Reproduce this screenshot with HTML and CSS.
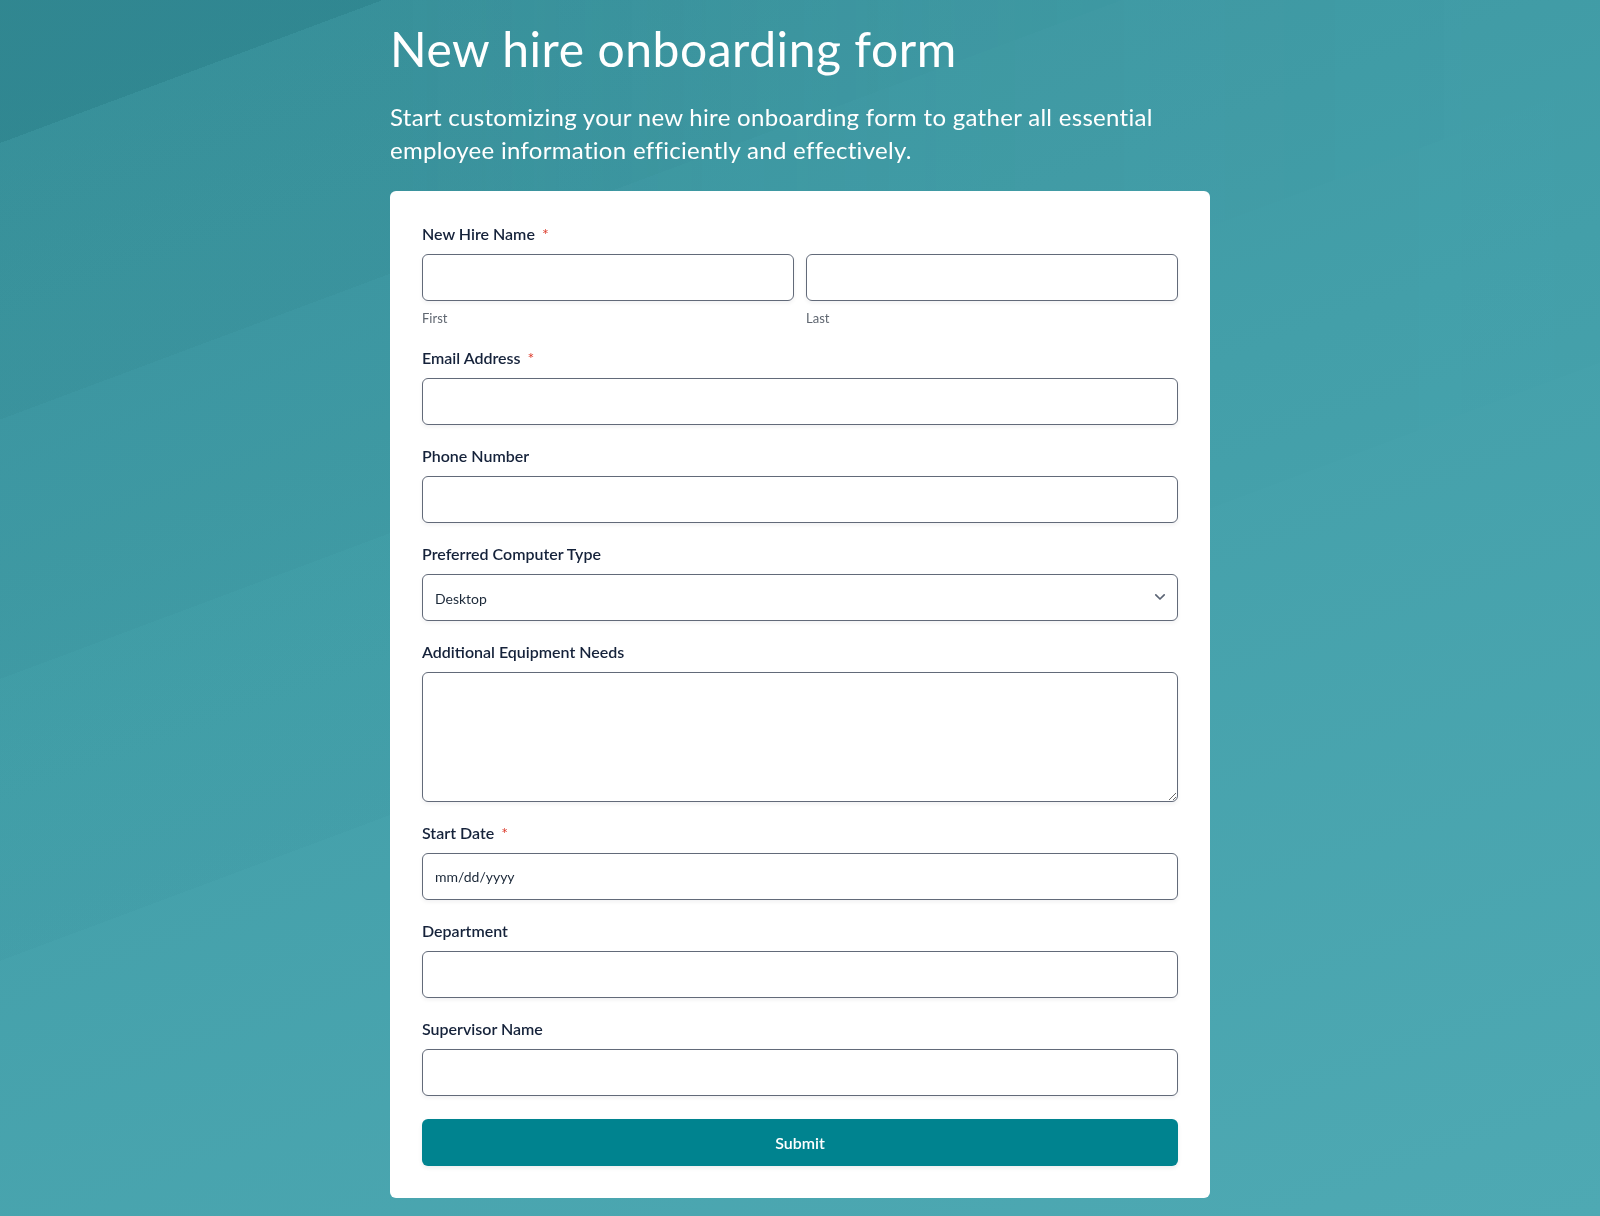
FILE: index.html
```html
<!DOCTYPE html>
<html lang="en">
<head>
<meta charset="utf-8">
<title>New hire onboarding form</title>
<link rel="stylesheet" href="styles.css">
</head>
<body>
<div class="bg"></div>
<main class="page">
  <h1 class="title">New hire onboarding form</h1>
  <p class="subtitle">Start customizing your new hire onboarding form to gather all essential employee information efficiently and effectively.</p>
  <form class="card">
    <div class="field">
      <label class="label">New Hire Name <span class="req">*</span></label>
      <div class="name-row">
        <div class="name-col">
          <input class="input" type="text">
          <span class="sublabel">First</span>
        </div>
        <div class="name-col">
          <input class="input" type="text">
          <span class="sublabel">Last</span>
        </div>
      </div>
    </div>
    <div class="field">
      <label class="label">Email Address <span class="req">*</span></label>
      <input class="input" type="text">
    </div>
    <div class="field">
      <label class="label">Phone Number</label>
      <input class="input" type="text">
    </div>
    <div class="field">
      <label class="label">Preferred Computer Type</label>
      <div class="select-wrap">
        <select class="input select">
          <option>Desktop</option>
          <option>Laptop</option>
        </select>
        <svg class="chevron" width="12" height="8" viewBox="0 0 12 8" aria-hidden="true"><path d="M1.8 1.8 6 6l4.2-4.2" fill="none" stroke="#5b6474" stroke-width="1.7" stroke-linecap="round" stroke-linejoin="round"/></svg>
      </div>
    </div>
    <div class="field">
      <label class="label">Additional Equipment Needs</label>
      <textarea class="input textarea"></textarea>
    </div>
    <div class="field">
      <label class="label">Start Date <span class="req">*</span></label>
      <input class="input date" type="text" placeholder="mm/dd/yyyy">
    </div>
    <div class="field">
      <label class="label">Department</label>
      <input class="input" type="text">
    </div>
    <div class="field">
      <label class="label">Supervisor Name</label>
      <input class="input" type="text">
    </div>
    <button class="submit" type="button">Submit</button>
  </form>
</main>
</body>
</html>
```

FILE: styles.css
```css
* { box-sizing: border-box; }

html, body {
  margin: 0;
  padding: 0;
}

body {
  min-height: 1216px;
  font-family: Lato, "Noto Sans", sans-serif;
  background: linear-gradient(160deg, #3d96a0 0%, #44a0aa 45%, #4ea9b3 100%);
  color: #1b2838;
  position: relative;
}

.bg {
  position: fixed;
  inset: 0;
  z-index: 0;
  pointer-events: none;
  background:
    linear-gradient(159.5deg,
      rgba(25, 105, 115, 0.34) 0 134px,
      rgba(25, 105, 115, 0.15) 134px 393px,
      rgba(25, 105, 115, 0.08) 393px 636px,
      rgba(25, 105, 115, 0.03) 636px 900px,
      rgba(25, 105, 115, 0) 900px);
  -webkit-mask-image: linear-gradient(to right, #000 0%, #000 25%, rgba(0,0,0,0.4) 60%, rgba(0,0,0,0.1) 100%);
  mask-image: linear-gradient(to right, #000 0%, #000 25%, rgba(0,0,0,0.4) 60%, rgba(0,0,0,0.1) 100%);
}

.page {
  position: relative;
  z-index: 1;
  width: 820px;
  margin: 0 auto;
  padding: 20px 0 18px;
}

.title {
  margin: 0;
  font-size: 48px;
  line-height: 58px;
  font-weight: 400;
  color: #ffffff;
  letter-spacing: 0.55px;
}

.subtitle {
  margin: 22px 0 0;
  font-size: 24px;
  line-height: 33px;
  font-weight: 400;
  color: #ffffff;
  letter-spacing: 0.3px;
}

.card {
  margin-top: 25px;
  background: #ffffff;
  border-radius: 6px;
  padding: 31px 32px 32px;
  display: flex;
  flex-direction: column;
  gap: 19px;
}

.field {
  display: flex;
  flex-direction: column;
}

.label {
  display: block;
  font-size: 16px;
  line-height: 24px;
  font-weight: 600;
  color: #15223a;
  margin-bottom: 8px;
}

.req {
  color: #dc3b2c;
  font-size: 16px;
  font-weight: 400;
  margin-left: 3px;
}

.name-row {
  display: flex;
  gap: 12px;
}

.name-col {
  flex: 1;
  display: flex;
  flex-direction: column;
}

.sublabel {
  margin-top: 8px;
  font-size: 13px;
  line-height: 18px;
  color: #5f6670;
}

.input {
  display: block;
  width: 100%;
  height: 47px;
  border: 1px solid #626a79;
  border-radius: 6px;
  background: #ffffff;
  box-shadow: 0 2px 4px rgba(15, 23, 42, 0.06);
  font-family: Lato, "Noto Sans", sans-serif;
  font-size: 14px;
  color: #1b2838;
  padding: 0 12px;
  margin: 0;
  outline: none;
}

.select-wrap {
  position: relative;
}

.select {
  -webkit-appearance: none;
  appearance: none;
  padding-right: 36px;
  padding-top: 2px;
}

.chevron {
  position: absolute;
  right: 12px;
  top: 19px;
}

.textarea {
  height: 130px;
  resize: vertical;
  padding: 12px;
}

.date {
  padding-top: 0;
}

.date::placeholder {
  color: #1b2838;
  opacity: 1;
}

.submit {
  margin-top: 4px;
  height: 47px;
  width: 100%;
  border: none;
  border-radius: 6px;
  background: #00838f;
  color: #ffffff;
  font-family: Lato, "Noto Sans", sans-serif;
  font-size: 16px;
  font-weight: 600;
  box-shadow: 0 2px 4px rgba(15, 23, 42, 0.08);
  cursor: pointer;
}
```
